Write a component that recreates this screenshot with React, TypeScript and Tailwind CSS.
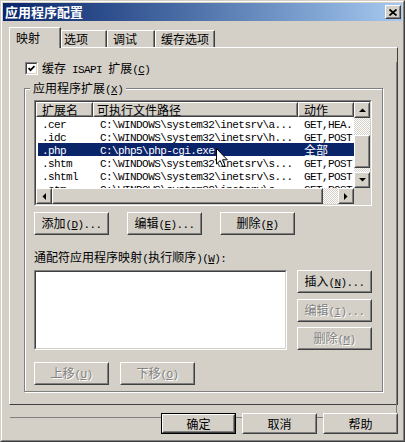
import React from "react";

// ascii runs in a half-width mono face, CJK at 12px (SimSun-like metrics)
function Txt({ s }: { s: string }) {
  const out: React.ReactNode[] = [];
  let under = false;
  let k = 0;
  for (const ch of s) {
    if (ch === "&") {
      under = true;
      continue;
    }
    const ascii = ch.charCodeAt(0) < 128;
    out.push(
      <span
        key={k++}
        className={
          (ascii ? "font-['Liberation_Mono',monospace] text-[11px] tracking-[-0.6px]" : "text-[12px]") +
          (under ? " underline underline-offset-1" : "")
        }
      >
        {ch === " " ? "\u00a0" : ch}
      </span>
    );
    under = false;
  }
  return <span className="whitespace-nowrap">{out}</span>;
}

function Raised({
  className = "",
  inner = "",
  children,
}: {
  className?: string;
  inner?: string;
  children?: React.ReactNode;
}) {
  return (
    <div className={"shrink-0 border border-t-white border-l-white border-r-[#404040] border-b-[#404040] bg-[#d4d0c8] " + className}>
      <div className={"h-full w-full flex items-center border border-t-[#d4d0c8] border-l-[#d4d0c8] border-r-[#808080] border-b-[#808080] " + inner}>
        {children}
      </div>
    </div>
  );
}

function Btn({ label, disabled = false }: { label: string; disabled?: boolean }) {
  return (
    <Raised className="w-[75px] h-[23px]" inner="justify-center">
      <span className={disabled ? "text-[#808080] [text-shadow:1px_1px_0_#fff]" : "text-black"}>
        <Txt s={label} />
      </span>
    </Raised>
  );
}

function Arrow({ dir }: { dir: "up" | "down" | "left" | "right" }) {
  const pts = {
    up: "0,4 7,4 3.5,0.5",
    down: "0,0 7,0 3.5,3.5",
    left: "4,0 4,7 0.5,3.5",
    right: "0,0 0,7 3.5,3.5",
  }[dir];
  const v = dir === "up" || dir === "down";
  return (
    <Raised className="w-[16px] h-[16px]" inner="justify-center">
      <svg width={v ? 7 : 4} height={v ? 4 : 7} viewBox={v ? "0 0 7 4" : "0 0 4 7"}>
        <polygon points={pts} fill="#000" />
      </svg>
    </Raised>
  );
}

function Tab({ label, active = false, w, pl }: { label: string; active?: boolean; w: string; pl: string }) {
  return (
    <div
      className={
        "flex items-center bg-[#d4d0c8] border-t border-l border-r border-t-white border-l-white border-r-[#404040] shadow-[inset_-1px_0_0_#808080] " +
        w +
        " " +
        pl +
        (active ? " relative z-10 -mb-px h-[21px]" : " h-[17px]")
      }
    >
      <Txt s={label} />
    </div>
  );
}

const checker =
  "bg-[image:repeating-conic-gradient(#ffffff_0_25%,#d4d0c8_0_50%)] bg-[length:2px_2px]";

export default function App() {
  const rows = [
    [".cer", "C:\\WINDOWS\\system32\\inetsrv\\a...", "GET,HEA..."],
    [".idc", "C:\\WINDOWS\\system32\\inetsrv\\h...", "GET,POST"],
    [".php", "C:\\php5\\php-cgi.exe", "全部"],
    [".shtm", "C:\\WINDOWS\\system32\\inetsrv\\s...", "GET,POST"],
    [".shtml", "C:\\WINDOWS\\system32\\inetsrv\\s...", "GET,POST"],
    [".stm", "C:\\WINDOWS\\system32\\inetsrv\\s...", "GET,POST"],
  ];

  return (
    <div className="relative w-[405px] h-[442px] bg-[#d4d0c8] border border-t-[#d4d0c8] border-l-[#d4d0c8] border-r-[#404040] border-b-[#404040] font-['Noto_Sans_CJK_SC',sans-serif] text-[12px] leading-[14px] text-black select-none">
      <div className="h-full flex flex-col border border-t-white border-l-white border-r-[#808080] border-b-[#808080] p-px">
        {/* title bar */}
        <div className="h-[18px] shrink-0 flex items-center justify-between bg-linear-to-r from-[#0a246a] to-[#a6caf0] pl-[2px] pr-[1px]">
          <span className="text-white font-bold text-[13px] leading-[18px]">应用程序配置</span>
          <Raised className="w-[16px] h-[14px]" inner="justify-center">
            <svg width="8" height="7" viewBox="0 0 8 7">
              <path d="M0.5 0.5 L7.5 6.5 M7.5 0.5 L0.5 6.5" stroke="#000" strokeWidth="1.7" />
            </svg>
          </Raised>
        </div>

        <div className="flex flex-col pl-[6px] pr-[4px]">
          {/* tabs */}
          <div className="mt-[6px] h-[20px] flex items-end">
            <Tab label="映射" active w="w-[52px]" pl="pl-[6px]" />
            <Tab label="选项" w="w-[46px]" pl="pl-[2px]" />
            <Tab label="调试" w="w-[48px]" pl="pl-[5px]" />
            <Tab label="缓存选项" w="w-[60px]" pl="pl-[5px]" />
          </div>

          {/* tab page */}
          <div className="h-[358px] border border-t-white border-l-white border-r-[#404040] border-b-[#404040]">
            <div className="h-full border-r border-b border-r-[#808080] border-b-[#808080] pl-[14px]">
              <div className="mt-[14px] ml-[1px] h-[13px] flex items-center gap-[4px]">
                <div className="w-[13px] h-[13px] border border-t-[#808080] border-l-[#808080] border-r-white border-b-white">
                  <div className="w-full h-full bg-white border border-t-[#404040] border-l-[#404040] border-r-[#d4d0c8] border-b-[#d4d0c8] flex items-center justify-center">
                    <svg width="7" height="7" viewBox="0 0 7 7">
                      <path d="M0.5 3 L2.5 5.2 L6.5 1" stroke="#000" strokeWidth="1.8" fill="none" />
                    </svg>
                  </div>
                </div>
                <Txt s="缓存 ISAPI 扩展(&C)" />
              </div>

              {/* group box */}
              <div className="relative mt-[13px] w-[359px] h-[304px] border border-[#808080] shadow-[inset_1px_1px_0_#fff,1px_1px_0_#fff] pl-[9px] pr-[10px] pt-[11px]">
                <div className="absolute left-[5px] -top-[8px] px-[3px] bg-[#d4d0c8] leading-[14px]">
                  <Txt s="应用程序扩展(&X)" />
                </div>

                {/* list view */}
                <div className="w-[338px] h-[106px] border border-t-[#808080] border-l-[#808080] border-r-white border-b-white">
                  <div className="h-full flex flex-col bg-white border border-t-[#404040] border-l-[#404040] border-r-[#d4d0c8] border-b-[#d4d0c8]">
                    <div className="h-[86px] flex">
                      <div className="w-[318px] overflow-hidden">
                        <div className="flex h-[15px] leading-[13px]">
                          <Raised className="w-[57px] h-[15px]" inner="pl-[4px]">
                            <Txt s="扩展名" />
                          </Raised>
                          <Raised className="w-[205px] h-[15px]" inner="pl-[2px]">
                            <Txt s="可执行文件路径" />
                          </Raised>
                          <Raised className="w-[56px] h-[15px]" inner="pl-[4px]">
                            <Txt s="动作" />
                          </Raised>
                        </div>
                        {rows.map((r, i) => (
                          <div
                            key={i}
                            className={
                              "flex h-[13px] items-center leading-[13px] " +
                              (i === 2 ? "bg-[#0a246a] text-white shadow-[inset_2px_0_0_#fff]" : "")
                            }
                          >
                            <div className="w-[57px] shrink-0 pl-[6px] overflow-hidden">
                              <Txt s={r[0]} />
                            </div>
                            <div className="w-[205px] shrink-0 pl-[7px] overflow-hidden">
                              <Txt s={r[1]} />
                            </div>
                            <div className="w-[56px] shrink-0 pl-[6px] overflow-hidden">
                              <Txt s={r[2]} />
                            </div>
                          </div>
                        ))}
                      </div>
                      <div className={"w-[16px] flex flex-col " + checker}>
                        <Arrow dir="up" />
                        <div className="flex-1">
                          <Raised className="mt-[17px] w-[16px] h-[33px]" />
                        </div>
                        <Arrow dir="down" />
                      </div>
                    </div>
                    <div className={"h-[16px] flex " + checker}>
                      <Arrow dir="left" />
                      <Raised className="w-[271px] h-[16px]" />
                      <div className="w-[15px]" />
                      <Arrow dir="right" />
                      <div className="w-[16px] bg-[#d4d0c8]" />
                    </div>
                  </div>
                </div>

                <div className="mt-[6px] flex gap-[18px]">
                  <Btn label="添加(&D)..." />
                  <Btn label="编辑(&E)..." />
                  <Btn label="删除(&R)" />
                </div>

                <div className="mt-[15px] leading-[14px]">
                  <Txt s="通配符应用程序映射(执行顺序)(&W):" />
                </div>

                <div className="mt-[4px] flex gap-[10px]">
                  <div className="w-[253px] h-[80px] border border-t-[#808080] border-l-[#808080] border-r-white border-b-white">
                    <div className="h-full bg-white border border-t-[#404040] border-l-[#404040] border-r-[#d4d0c8] border-b-[#d4d0c8]" />
                  </div>
                  <div className="flex flex-col">
                    <Btn label="插入(&N)..." />
                    <div className="mt-[6px]">
                      <Btn label="编辑(&I)..." disabled />
                    </div>
                    <div className="mt-[5px]">
                      <Btn label="删除(&M)" disabled />
                    </div>
                  </div>
                </div>

                <div className="mt-[12px] flex gap-[11px]">
                  <Btn label="上移(&U)" disabled />
                  <Btn label="下移(&O)" disabled />
                </div>
              </div>
            </div>
          </div>

          {/* dialog buttons */}
          <div className="mt-[8px] flex justify-end gap-[6px]">
            <div className="w-[75px] h-[21px] border border-black">
              <Raised className="w-full h-full" inner="justify-center">
                <Txt s="确定" />
              </Raised>
            </div>
            <Raised className="w-[75px] h-[21px]" inner="justify-center">
              <Txt s="取消" />
            </Raised>
            <Raised className="w-[75px] h-[21px]" inner="justify-center">
              <Txt s="帮助" />
            </Raised>
          </div>
        </div>
      </div>

      {/* mouse pointer */}
      <svg className="absolute left-[215px] top-[147px]" width="12" height="20" viewBox="0 0 12 20">
        <path d="M0.5 0.5 V16 L4.2 12.6 L6.8 18.5 L9 17.5 L6.5 11.8 H11.3 Z" fill="#fff" stroke="#000" strokeWidth="1" />
      </svg>
    </div>
  );
}
